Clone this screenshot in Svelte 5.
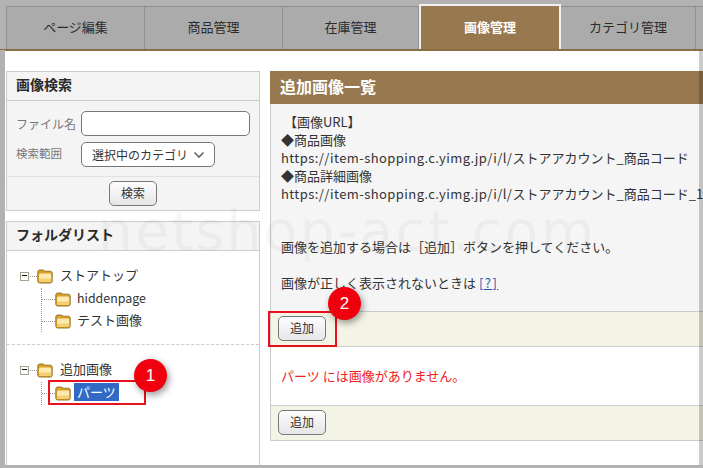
<script>
  const tabs = [
    { label: 'ページ編集', w: 139 },
    { label: '商品管理', w: 138 },
    { label: '在庫管理', w: 136 },
    { label: '画像管理', w: 142, active: true },
    { label: 'カテゴリ管理', w: 135 },
    { label: '', w: 40 }
  ];
</script>

{#snippet folder()}
  <svg class="folder" width="16" height="15" viewBox="0 0 16 15" aria-hidden="true">
    <path d="M0.8 12V3C0.8 1.8 1.6 1 2.8 1H6C7 1 7.2 2.2 8.2 2.2H13.2C14.4 2.2 15.2 3 15.2 4.2V12C15.2 13.2 14.4 14 13.2 14H2.8C1.6 14 0.8 13.2 0.8 12Z" fill="#d9a02a" stroke="#8f6c1e" stroke-width="0.9"/>
    <path d="M2 6.2C2 5 2.6 4.4 3.6 4.4H12.6C13.6 4.4 14.2 5 14.2 6V11.6C14.2 12.4 13.7 12.9 13 12.9H3.2C2.5 12.9 2 12.4 2 11.6Z" fill="#fdeaae"/>
    <path d="M2 9.6H14.2V11.6C14.2 12.4 13.7 12.9 13 12.9H3.2C2.5 12.9 2 12.4 2 11.6Z" fill="#f6cf72"/>
  </svg>
{/snippet}

{#snippet toggle()}
  <span class="toggle"><i></i></span>
{/snippet}

<div class="frame">
  <nav class="tabs">
    {#each tabs as t}
      <div class="tab" class:active={t.active} style="width:{t.w}px">{t.label}</div>
    {/each}
  </nav>

  <main class="body">
    <aside class="side">
      <section class="panel search">
        <h2 class="phead">画像検索</h2>
        <div class="fields">
          <div class="row"><span class="lab">ファイル名</span><span class="input"></span></div>
          <div class="row"><span class="lab small">検索範囲</span>
            <span class="select">選択中のカテゴリ
              <svg width="12" height="8" viewBox="0 0 12 8" aria-hidden="true"><path d="M1.5 1.5L6 6L10.5 1.5" fill="none" stroke="#666" stroke-width="1.6"/></svg>
            </span>
          </div>
        </div>
        <div class="actions"><span class="btn">検索</span></div>
      </section>

      <section class="panel folders">
        <h2 class="phead">フォルダリスト</h2>
        <div class="tree top">
          <div class="node">{@render toggle()}<span class="dash"></span>{@render folder()}<span class="name">ストアトップ</span></div>
          <div class="kids">
            <div class="node kid"><span class="dash"></span>{@render folder()}<span class="name latin">hiddenpage</span></div>
            <div class="node kid"><span class="dash"></span>{@render folder()}<span class="name">テスト画像</span></div>
          </div>
        </div>
        <div class="tree bottom">
          <div class="node">{@render toggle()}<span class="dash"></span>{@render folder()}<span class="name">追加画像</span></div>
          <div class="kids one">
            <div class="node kid"><span class="dash"></span>{@render folder()}<span class="name sel">パーツ</span></div>
          </div>
        </div>
      </section>
    </aside>

    <section class="content">
      <h1 class="chead">追加画像一覧</h1>
      <div class="info">
        <p>&nbsp;【画像URL】</p>
        <p>◆商品画像</p>
        <p><span class="url">https://item-shopping.c.yimg.jp/i/l/</span>ストアアカウント_商品コード</p>
        <p>◆商品詳細画像</p>
        <p><span class="url">https://item-shopping.c.yimg.jp/i/l/</span>ストアアカウント_商品コード_1</p>
        <p class="gap">画像を追加する場合は［追加］ボタンを押してください。</p>
        <p class="gap2">画像が正しく表示されないときは <a href="#help">[?]</a></p>
      </div>
      <div class="bar"><span class="btn">追加</span></div>
      <div class="empty">パーツ には画像がありません。</div>
      <div class="bar"><span class="btn">追加</span></div>
    </section>
  </main>

  <div class="mark">netshop-act.com</div>
  <div class="redbox box1"></div>
  <div class="redbox box2"></div>
  <div class="num n1">1</div>
  <div class="num n2">2</div>
  <div class="edge left"></div>
  <div class="edge right"></div>
  <div class="edge bot"></div>
</div>

<style>
  :global(body) { margin: 0; background: #fff; }
  .frame {
    position: relative;
    width: 703px;
    height: 468px;
    overflow: hidden;
    background: #fff;
    font-family: "Noto Sans CJK JP", "Open Sans", sans-serif;
    font-size: 13px;
    color: #333;
  }
  .tabs {
    display: flex;
    box-sizing: border-box;
    height: 51px;
    padding: 6px 0 0 6px;
    background: #b2b2b2;
    border-bottom: 2px solid #8a6f45;
  }
  .tab {
    flex: none;
    box-sizing: border-box;
    height: 43px;
    line-height: 39px;
    text-align: center;
    background: #ababab;
    border-top: 1px solid #8f8f8f;
    border-right: 1px solid #8f8f8f;
    color: #2b2b2b;
    font-size: 13px;
  }
  .tab:first-child { border-left: 1px solid #8f8f8f; }
  .tab.active {
    margin-top: -2px;
    height: 45px;
    line-height: 42px;
    background: #98794f;
    color: #fff;
    font-weight: 700;
    border: 2px solid #f0f0f0;
    border-bottom: 0;
  }
  .body {
    display: flex;
    gap: 10px;
    padding: 20px 0 0 6px;
  }
  .side { flex: none; width: 254px; }
  .panel { border: 1px solid #cbcbcb; box-sizing: border-box; }
  .phead {
    margin: 0;
    height: 28px;
    line-height: 25px;
    padding-left: 9px;
    font-size: 14px;
    font-weight: 700;
    color: #2a2a2a;
    background: #f4f4f4;
    border-bottom: 1px solid #cbcbcb;
  }
  .search { height: 140px; background: #f4f4f4; margin-bottom: 10px; }
  .fields { padding: 10px 0 0 9px; height: 65px; border-bottom: 1px solid #e2e2e2; }
  .row { display: flex; align-items: center; margin-bottom: 6px; }
  .lab { width: 65px; color: #777; font-size: 12px; flex: none; line-height: 25px; height: 25px; }
  .lab.small { font-size: 11.5px; line-height: 23px; }
  .input {
    width: 169px; height: 25px; box-sizing: border-box;
    background: #fff; border: 1px solid #777; border-radius: 5px;
  }
  .select {
    display: flex; align-items: center; justify-content: space-between;
    box-sizing: border-box;
    width: 134px; height: 25px; padding: 0 9px 0 10px;
    background: #fff; border: 1px solid #777; border-radius: 5px;
    font-size: 12px; color: #333; white-space: nowrap;
  }
  .actions { display: flex; justify-content: center; padding-top: 4px; }
  .btn {
    display: inline-block;
    box-sizing: border-box;
    width: 48px; height: 25px; line-height: 22px;
    text-align: center; font-size: 12px; color: #333;
    background: linear-gradient(#fdfdfd, #e6e6e6);
    border: 1px solid #777; border-radius: 5px;
  }
  .folders { height: 260px; }
  .tree { padding-left: 13px; }
  .tree.top { padding-top: 15px; height: 78px; border-bottom: 1px dashed #ccc; }
  .tree.bottom { padding-top: 15px; }
  .node { display: flex; align-items: center; height: 20px; margin-bottom: 5px; }
  .toggle {
    flex: none; position: relative; width: 9px; height: 9px; box-sizing: border-box;
    border: 1px solid #a3a38f; background: #fff;
  }
  .toggle i { position: absolute; left: 1px; top: 2.5px; width: 5px; height: 1px; background: #111; }
  .dash { flex: none; width: 7px; border-top: 1px dotted #999; margin: 0 0 0 1px; }
  .folder { flex: none; margin-right: 7px; }
  .name { font-size: 13px; line-height: 16px; color: #333; white-space: nowrap; margin-top: -2px; }
  .name.latin { font-size: 12.4px; }
  .name.sel { background: #316ac5; color: #fff; padding: 0 3px; margin-left: -3px; line-height: 18px; }
  .kids { margin-left: 21px; border-left: 1px dotted #999; margin-top: -3px; padding-top: 1px; height: 43px; }
  .kids.one { height: 22px; }
  .kid .dash { width: 13px; margin-left: 0; }
  .kid .folder { margin-right: 6px; }
  .kid { height: 20px; margin-bottom: 2px; }

  .content { flex: none; width: 440px; border-left: 1px solid #cbcbcb; box-sizing: border-box; background: #fff; height: 370px; }
  .chead {
    margin: 0 0 0 -1px;
    height: 33px; line-height: 30px;
    padding-left: 10px;
    background: #98794f; color: #fff;
    font-size: 16px; font-weight: 700;
  }
  .info { background: #f5f5f5; padding: 9px 0 0 10px; height: 208px; box-sizing: border-box; font-size: 13px; line-height: 18px; border-bottom: 1px solid #cbcbcb; white-space: nowrap; overflow: hidden; }
  .info p { margin: 0; }
  .url { letter-spacing: 0.42px; }
  .info .gap { margin-top: 35px; }
  .info .gap2 { margin-top: 18px; }
  .info a { color: #1a55b0; letter-spacing: 1.5px; }
  .bar { background: #f4f4e6; height: 35px; padding: 4px 0 0 7px; box-sizing: border-box; border-bottom: 1px solid #cbcbcb; }
  .empty { height: 59px; line-height: 58px; padding-left: 10px; color: #ee2222; background: #fff; border-bottom: 1px solid #cbcbcb; box-sizing: border-box; }

  .mark {
    position: absolute; left: 98px; top: 199px;
    font-family: "DejaVu Sans", sans-serif;
    font-size: 55px; letter-spacing: 2.4px;
    color: rgba(0, 0, 0, 0.035);
    white-space: nowrap; pointer-events: none;
  }
  .redbox { position: absolute; border: 2px solid #e8121c; box-sizing: border-box; }
  .box1 { left: 48px; top: 380px; width: 98px; height: 25px; }
  .box2 { left: 268px; top: 311px; width: 69px; height: 36px; }
  .num {
    position: absolute; width: 33px; height: 33px; border-radius: 50%;
    background: #f0000f; color: #fff; text-align: center; line-height: 33px;
    font-family: "Liberation Sans", sans-serif; font-size: 17px;
    box-shadow: 2px 3px 7px rgba(0,0,0,.4);
  }
  .n1 { left: 134px; top: 359px; }
  .n2 { left: 328px; top: 287px; }
  .edge { position: absolute; }
  .left { left: 0; top: 50px; width: 5px; height: 418px; background: #b2b2b2; }
  .right { right: 0; top: 51px; width: 4px; height: 417px; background: rgba(0, 0, 0, 0.2); }
  .bot { left: 0; bottom: 0; width: 703px; height: 3px; background: #b2b2b2; }
</style>
